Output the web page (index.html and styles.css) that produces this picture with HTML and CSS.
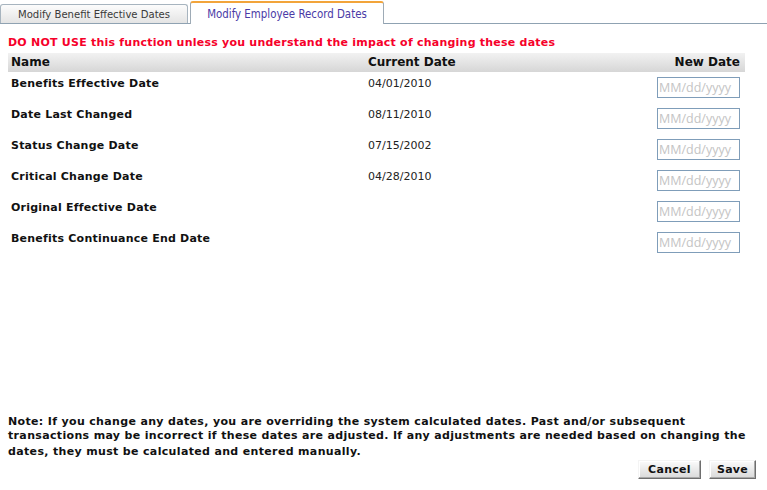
FILE: index.html
```html
<!DOCTYPE html>
<html>
<head>
<meta charset="utf-8">
<link rel="stylesheet" href="styles.css">
</head>
<body>
<div class="page">
  <div class="tabs">
    <div class="tab tab-inactive">Modify Benefit Effective Dates</div>
    <div class="tab tab-active">Modify Employee Record Dates</div>
  </div>
  <div class="content">
    <div class="warning">DO NOT USE this function unless you understand the impact of changing these dates</div>
    <div class="grid-head">
      <div class="c-name">Name</div>
      <div class="c-cur">Current Date</div>
      <div class="c-new">New Date</div>
    </div>
    <div class="row">
      <div class="c-name">Benefits Effective Date</div>
      <div class="c-cur">04/01/2010</div>
      <div class="c-new"><input class="date" type="text" placeholder="MM/dd/yyyy"></div>
    </div>
    <div class="row">
      <div class="c-name">Date Last Changed</div>
      <div class="c-cur">08/11/2010</div>
      <div class="c-new"><input class="date" type="text" placeholder="MM/dd/yyyy"></div>
    </div>
    <div class="row">
      <div class="c-name">Status Change Date</div>
      <div class="c-cur">07/15/2002</div>
      <div class="c-new"><input class="date" type="text" placeholder="MM/dd/yyyy"></div>
    </div>
    <div class="row">
      <div class="c-name">Critical Change Date</div>
      <div class="c-cur">04/28/2010</div>
      <div class="c-new"><input class="date" type="text" placeholder="MM/dd/yyyy"></div>
    </div>
    <div class="row">
      <div class="c-name">Original Effective Date</div>
      <div class="c-cur"></div>
      <div class="c-new"><input class="date" type="text" placeholder="MM/dd/yyyy"></div>
    </div>
    <div class="row">
      <div class="c-name">Benefits Continuance End Date</div>
      <div class="c-cur"></div>
      <div class="c-new"><input class="date" type="text" placeholder="MM/dd/yyyy"></div>
    </div>
  </div>
  <div class="note">
    <div class="note-l1">Note: If you change any dates, you are overriding the system calculated dates. Past and/or subsequent</div>
    <div class="note-l2">transactions may be incorrect if these dates are adjusted. If any adjustments are needed based on changing the</div>
    <div class="note-l3">dates, they must be calculated and entered manually.</div>
  </div>
  <div class="buttons">
    <button class="btn btn-cancel">Cancel</button>
    <button class="btn btn-save">Save</button>
  </div>
</div>
</body>
</html>
```
FILE: styles.css
```css
html, body {
  margin: 0;
  padding: 0;
  background: #fff;
}
body {
  font-family: "DejaVu Sans", Verdana, sans-serif;
  font-size: 11px;
  color: #111;
}
.page {
  height: 490px;
  display: flex;
  flex-direction: column;
}
.tabs {
  display: flex;
  align-items: flex-end;
  height: 24px;
  border-bottom: 1px solid #8fa2b2;
  box-sizing: border-box;
  flex: none;
}
.tab {
  box-sizing: border-box;
  text-align: center;
  font-family: "DejaVu Sans Condensed", "DejaVu Sans", sans-serif;
  font-size: 11.2px;
  border: 1px solid #a7b4bf;
  border-bottom: none;
  border-radius: 3px 3px 0 0;
}
.tab-inactive {
  width: 188px;
  height: 19px;
  line-height: 19px;
  color: #3a3a3a;
  background: linear-gradient(#fcfcfc, #e4e4e4);
}
.tab-active {
  width: 194px;
  height: 23px;
  margin-left: 2px;
  margin-bottom: -1px;
  line-height: 20px;
  padding-top: 1px;
  font-size: 11.4px;
  color: #4a3aa6;
  background: #fff;
  border-top: 2px solid #f2a43a;
  border-color: #f2a43a #9eabb6 #fff #9eabb6;
}
.content {
  padding: 0 22px 0 8px;
}
.warning {
  color: #f6002a;
  font-weight: bold;
  letter-spacing: 0.23px;
  margin-top: 12px;
  line-height: 14px;
  height: 17px;
}
.grid-head, .row {
  display: grid;
  grid-template-columns: 357px 1fr auto;
  padding: 0 5px 0 3px;
}
.grid-head {
  height: 19px;
  line-height: 19px;
  font-weight: bold;
  font-size: 12px;
  background: linear-gradient(#f2f2f2, #d6d6d6);
  color: #111;
}
.c-new {
  text-align: right;
}
.row {
  height: 31px;
  box-sizing: border-box;
  padding-top: 5px;
  line-height: 13px;
}
.row .c-name {
  font-weight: bold;
  letter-spacing: 0.22px;
}
.row .c-cur {
  color: #222;
}
.date {
  box-sizing: border-box;
  width: 83px;
  height: 21px;
  margin: 0;
  padding: 0 1px;
  border: 1px solid #7f9db9;
  font-family: "Open Sans", "DejaVu Sans", sans-serif;
  font-size: 12.5px;
  display: block;
}
.date::placeholder {
  color: #c4c4c4;
}
.note {
  margin-top: auto;
  padding: 0 8px;
  font-weight: bold;
  white-space: nowrap;
  line-height: 14px;
  letter-spacing: 0.34px;
}
.note-l3 {
  margin-top: 2px;
}
.buttons {
  display: flex;
  justify-content: flex-end;
  gap: 8px;
  padding: 1px 11px 11px 0;
}
.btn {
  font-family: "DejaVu Sans", Verdana, sans-serif;
  font-weight: bold;
  font-size: 11px;
  letter-spacing: 0.3px;
  height: 19px;
  padding: 0;
  color: #111;
  background: linear-gradient(#fbfbfb, #d9d9d9);
  border: 1px solid;
  border-color: #f4f4f4 #6e6e6e #6e6e6e #f4f4f4;
  box-shadow: inset -1px -1px 0 #a8a8a8, inset 1px 1px 0 #fff;
}
.btn-cancel { width: 63px; }
.btn-save { width: 47px; }
```
